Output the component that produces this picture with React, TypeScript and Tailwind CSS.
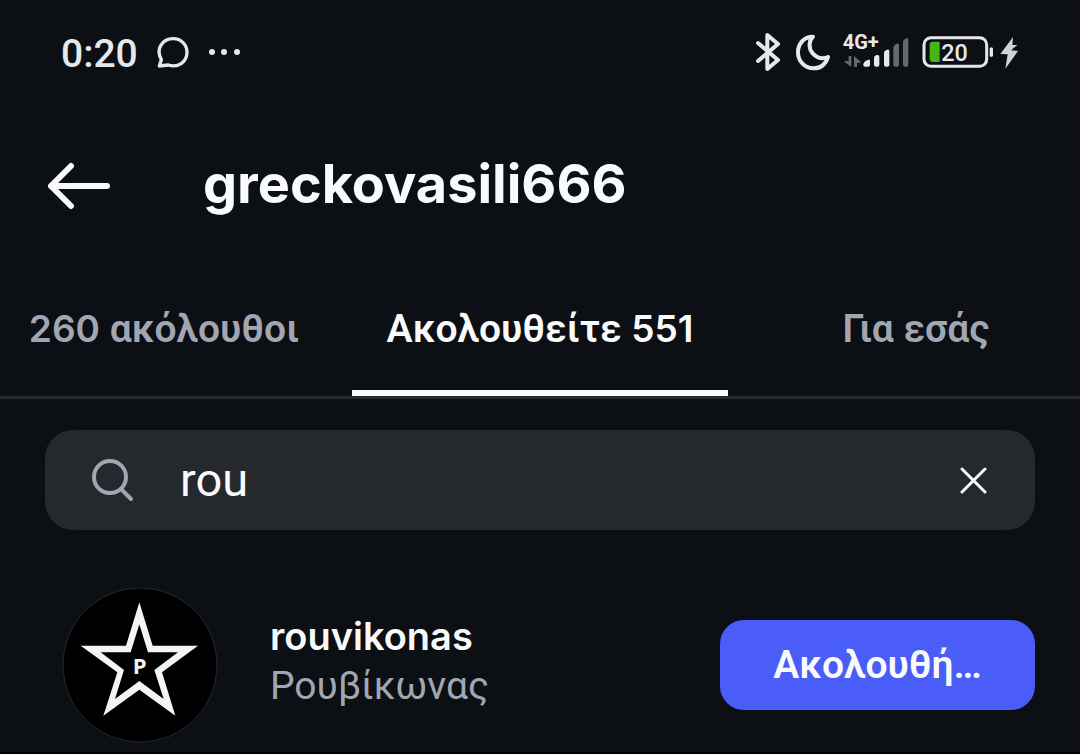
import { useState } from "react";

const tabs = [
  { id: "followers", parts: [{ text: "260", latin: true }, { text: " ακόλουθοι", latin: false }] },
  { id: "following", parts: [{ text: "Ακολουθείτε ", latin: false }, { text: "551", latin: true }] },
  { id: "suggested", parts: [{ text: "Για εσάς", latin: false }] },
];

function BluetoothIcon() {
  return (
    <svg className="w-[27px] h-[42px]" viewBox="45 31 81 126" fill="none" stroke="currentColor" strokeWidth="12" strokeLinecap="round" strokeLinejoin="round">
      <path d="M54 67L114 118L82 145V43L114 70L54 121" />
    </svg>
  );
}

function MoonIcon() {
  return (
    <svg className="w-9 h-[42px]" viewBox="165 31 108 126" fill="none" stroke="currentColor" strokeWidth="12" strokeLinejoin="round">
      <path d="M219 48C194 47 174 68 174 95C174 122 194 143 221 143C242 143 257 130 264 109C248 116 231 112 218 98C205 83 206 61 219 48Z" />
    </svg>
  );
}

function SignalIcon() {
  return (
    <svg className="w-[67px] h-[42px]" viewBox="305 31 201 126" fill="currentColor">
      <text x="307" y="86" fontSize="60" className="font-['Roboto',sans-serif] font-bold">4G+</text>
      <path d="M369 130Q371 121 384 117Q389 116 389 121V132Q389 138 383 138H374Q368 138 369 130Z" />
      <path d="M401 112Q401 106 407 104L411 103Q417 102 417 108V132Q417 138 411 138H407Q401 138 401 132Z" />
      <path d="M431 97Q431 92 436 89L441 87Q447 85 447 91V132Q447 138 441 138H437Q431 138 431 132Z" />
      <g fill="#66686c">
        <path d="M459 80Q459 75 464 72L470 69Q476 67 476 73V132Q476 138 470 138H465Q459 138 459 132Z" />
        <path d="M488 64Q488 59 493 56L498 53Q504 51 504 57V132Q504 138 498 138H494Q488 138 488 132Z" />
        <path d="M325 106H333V139L313 124V121H325Z" />
        <path d="M341 106L361 123V126H350V139H341Z" />
      </g>
    </svg>
  );
}

function BatteryIcon() {
  return (
    <svg className="w-[73px] h-[42px]" viewBox="544 31 219 126" fill="none">
      <rect x="550" y="51" width="188" height="86" rx="21" stroke="currentColor" strokeWidth="9" />
      <path d="M576 63H597V124H576Q567 124 567 115V72Q567 63 576 63Z" fill="#43b616" />
      <rect x="747" y="80" width="10" height="29" rx="5" fill="currentColor" />
      <text x="602" y="122" fontSize="70" fill="currentColor" className="font-['Roboto',sans-serif] font-medium">20</text>
    </svg>
  );
}

function StatusBar() {
  return (
    <div className="flex items-center justify-between h-[104px] pl-[61px] pr-[62px] text-[#e6e8ea]">
      <div className="flex items-center">
        <span className="pt-1 font-['Roboto',sans-serif] font-medium text-[39px] leading-[48px]">0:20</span>
        <svg className="w-8 h-8 ml-[19px]" viewBox="352 48 96 96" fill="none" stroke="currentColor" strokeWidth="10" strokeLinejoin="round">
          <path d="M359 138L365 119C347 87 368 56 401 56C424 56 442 74 442 97C442 125 417 144 386 135Z" />
        </svg>
        <svg className="w-8 h-3 ml-5" viewBox="0 0 32 12" fill="currentColor">
          <circle cx="3" cy="6" r="3" />
          <circle cx="15" cy="6" r="3" />
          <circle cx="28" cy="6" r="3" />
        </svg>
      </div>
      <div className="flex items-center">
        <BluetoothIcon />
        <span className="ml-[13px]"><MoonIcon /></span>
        <span className="ml-[11px]"><SignalIcon /></span>
        <span className="ml-[13px]"><BatteryIcon /></span>
        <svg className="w-[18px] h-[42px] ml-[5px]" viewBox="779 31 54 126" fill="#d1d3d6">
          <path d="M818 49L780 100L802 101L795 144L833 91L812 89L831 73H816Z" />
        </svg>
      </div>
    </div>
  );
}

export default function App() {
  const [active, setActive] = useState("following");
  const [query, setQuery] = useState("rou");

  return (
    <div className="min-h-screen overflow-hidden bg-[#0c0f14] border-b-2 border-black text-[#f8fafb] font-['Inter',sans-serif]">
      <StatusBar />

      <header className="flex items-center h-40 pl-12">
        <button type="button" aria-label="Πίσω" className="shrink-0">
          <svg className="w-[62px] h-[52px]" viewBox="0 0 62 52" fill="none" stroke="currentColor" strokeWidth="6" strokeLinecap="round" strokeLinejoin="round">
            <path d="M3 28H59M23 8L3 28L23 48" />
          </svg>
        </button>
        <h1 className="ml-[93px] text-[54px] leading-[64px] font-bold">greckovasili666</h1>
      </header>

      <nav className="flex justify-center h-[135px] border-b-[3px] border-[#25282d]">
        {tabs.map((tab) => (
          <button
            key={tab.id}
            type="button"
            onClick={() => setActive(tab.id)}
            className={`w-[376px] shrink-0 border-b-[6px] pt-1 text-[39px] leading-[48px] whitespace-pre font-['Roboto',sans-serif] font-semibold ${
              active === tab.id ? "border-[#f8fafb] text-[#f8fafb]" : "border-transparent text-[#a2a6b2]"
            }`}
          >
            {tab.parts.map((part) => (
              <span key={part.text} className={part.latin ? "font-['Inter',sans-serif] text-[37px]" : ""}>
                {part.text}
              </span>
            ))}
          </button>
        ))}
      </nav>

      <main className="px-[45px] pt-[31px]">
        <label className="flex items-center h-[100px] rounded-[28px] bg-[#25282d] pl-[45px] pr-12">
          <svg className="w-11 h-11 shrink-0 text-[#a2a6b2]" viewBox="0 0 44 44" fill="none" stroke="currentColor" strokeWidth="4" strokeLinecap="round">
            <circle cx="20" cy="19" r="16" />
            <path d="M31 31L41 41" />
          </svg>
          <input
            type="text"
            aria-label="Αναζήτηση"
            value={query}
            onChange={(e) => setQuery(e.target.value)}
            className="flex-1 min-w-0 ml-[46px] bg-transparent outline-none font-['Roboto',sans-serif] text-[47px] leading-[56px]"
          />
          <button type="button" aria-label="Διαγραφή" onClick={() => setQuery("")} className="shrink-0">
            <svg className="w-7 h-7" viewBox="0 0 28 28" fill="none" stroke="currentColor" strokeWidth="3" strokeLinecap="round">
              <path d="M3 3L26 26M26 3L3 26" />
            </svg>
          </button>
        </label>

        <div className="flex items-center mt-[57px] pl-[17px]">
          <svg className="w-[156px] h-[156px] shrink-0" viewBox="36 36 468 468">
            <circle cx="270" cy="270" r="231" fill="#000" stroke="#25282d" strokeWidth="3" />
            <path
              fill="#f4f4f4"
              fillRule="evenodd"
              d="M268 82L308 212H444L336 292L376 422L268 344L160 422L202 292L92 212H228ZM268 148L242 232H152L222 285L195 372L268 318L341 372L313 285L384 232H294Z"
            />
            <text x="269" y="298" textAnchor="middle" fontSize="66" fill="#f4f4f4" className="font-['Open_Sans',sans-serif] font-bold">P</text>
          </svg>
          <div className="flex-1 min-w-0 ml-[52px] pb-2">
            <p className="text-[38px] leading-[50px] font-semibold">rouvikonas</p>
            <p className="text-[39px] leading-[50px] font-['Roboto',sans-serif] text-[#a2a6b2]">Ρουβίκωνας</p>
          </div>
          <button
            type="button"
            className="w-[315px] h-[90px] shrink-0 rounded-3xl bg-[#4a5df9] px-12 font-['Roboto',sans-serif] text-[39px] leading-[48px] font-semibold"
          >
            Ακολουθή…
          </button>
        </div>
      </main>
    </div>
  );
}
